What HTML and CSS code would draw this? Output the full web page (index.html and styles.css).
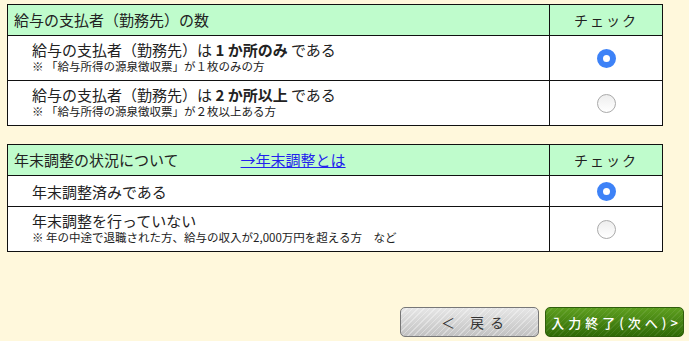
FILE: index.html
```html
<!DOCTYPE html>
<html lang="ja">
<head>
    <meta charset="UTF-8">
    <title>給与の支払者</title>
    <link rel="stylesheet" href="styles.css">
</head>
<body>
    <table class="check-table">
        <tr class="head">
            <th class="label">給与の支払者（勤務先）の数</th>
            <th class="check">チェック</th>
        </tr>
        <tr class="tall">
            <td class="label">
                <div class="main">給与の支払者（勤務先）は <b>1 か所のみ</b> である</div>
                <div class="note">※ 「給与所得の源泉徴収票」が１枚のみの方</div>
            </td>
            <td class="check"><span class="radio on"></span></td>
        </tr>
        <tr class="tall">
            <td class="label">
                <div class="main">給与の支払者（勤務先）は <b>2 か所以上</b> である</div>
                <div class="note">※ 「給与所得の源泉徴収票」が２枚以上ある方</div>
            </td>
            <td class="check"><span class="radio"></span></td>
        </tr>
    </table>

    <table class="check-table second">
        <tr class="head">
            <th class="label">年末調整の状況について<a href="#" class="help">→年末調整とは</a></th>
            <th class="check">チェック</th>
        </tr>
        <tr class="short">
            <td class="label"><div class="main">年末調整済みである</div></td>
            <td class="check"><span class="radio on"></span></td>
        </tr>
        <tr class="tall">
            <td class="label">
                <div class="main">年末調整を行っていない</div>
                <div class="note">※ 年の中途で退職された方、給与の収入が2,000万円を超える方　など</div>
            </td>
            <td class="check"><span class="radio"></span></td>
        </tr>
    </table>

    <div class="buttons">
        <button class="btn back">＜ 戻る</button>
        <button class="btn next">入力終了(次へ)&gt;</button>
    </div>
</body>
</html>
```

FILE: styles.css
```css
body {
    margin: 0;
    padding: 4px 0 0 7px;
    background: #fff8dc;
    font-family: "Noto Sans CJK JP", "Noto Sans", sans-serif;
    color: #222;
}
.check-table {
    width: 656px;
    border-collapse: collapse;
    background: #fff;
}
.check-table.second {
    margin-top: 18px;
}
th, td {
    border: 1px solid #111;
    padding: 0;
}
th {
    background: #bffccc;
    font-weight: normal;
    font-size: 15px;
    height: 30px;
    line-height: 18px;
}
th.label {
    text-align: left;
    padding-left: 6px;
}
th.check {
    width: 112px;
    text-align: center;
    font-size: 14px;
    letter-spacing: 2px;
}
td.label {
    padding-left: 24px;
}
td.check {
    text-align: center;
}
tr.tall td {
    height: 44px;
}
tr.short td {
    height: 30px;
}
.main {
    font-size: 15px;
    line-height: 19px;
}
.main b {
    font-weight: bold;
}
.note {
    font-size: 11.5px;
    line-height: 15px;
    margin-bottom: 2px;
}
.help {
    margin-left: 62px;
    color: #2222ee;
}
.radio {
    display: block;
    margin: 0 auto;
    width: 19px;
    height: 19px;
    border-radius: 50%;
    border: 1px solid #aaa;
    background: linear-gradient(#eee, #fff);
    box-sizing: border-box;
}
.radio.on {
    border: 6px solid #3d82f7;
    background: #fff;
}
.buttons {
    display: flex;
    justify-content: flex-end;
    gap: 6px;
    margin-top: 55px;
    width: 677px;
}
.btn {
    width: 139px;
    height: 30px;
    border-radius: 5px;
    font-family: "Noto Sans CJK JP", sans-serif;
    font-size: 13px;
    letter-spacing: 3px;
    padding: 0;
}
.back {
    border: 1px solid #777;
    color: #333;
    font-size: 14px;
    letter-spacing: 6px;
    padding-left: 12px;
    background:
        repeating-linear-gradient(135deg, rgba(255,255,255,0.35) 0 1px, transparent 1px 4px),
        linear-gradient(#e6e6e6, #c2c2c2);
}
.next {
    border: 1px solid #2f5e0c;
    color: #fff;
    font-weight: 500;
    letter-spacing: 4px;
    padding-left: 4px;
    background:
        repeating-linear-gradient(135deg, rgba(255,255,255,0.08) 0 1px, transparent 1px 4px),
        linear-gradient(#5e9f1f, #2f6a06);
}
```
